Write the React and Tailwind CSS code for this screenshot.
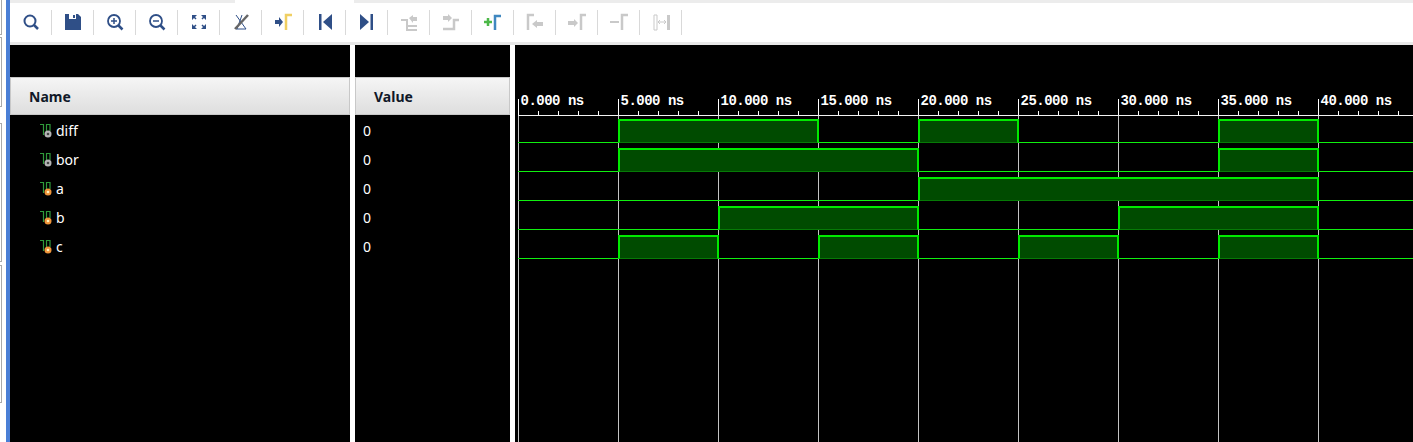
const signals = [
  { name: 'diff', kind: 'out', edges: [[5, 15], [20, 25], [35, 40]] },
  { name: 'bor', kind: 'out', edges: [[5, 20], [35, 40]] },
  { name: 'a', kind: 'in', edges: [[20, 40]] },
  { name: 'b', kind: 'in', edges: [[10, 20], [30, 40]] },
  { name: 'c', kind: 'in', edges: [[5, 10], [15, 20], [25, 30], [35, 40]] },
];

const BLUE = '#2f4f87';
const GRAY = '#c9c9c9';

function Icon({ children }) {
  return (
    <svg width="22" height="22" viewBox="0 0 22 22" fill="none">
      {children}
    </svg>
  );
}

const toolbar = [
  <Icon><circle cx="10" cy="10" r="5.5" stroke={BLUE} strokeWidth="2" /><path d="M14 14l4 4" stroke={BLUE} strokeWidth="2.5" /></Icon>,
  <Icon><path d="M3 3h13l3 3v13H3z" fill={BLUE} /><path d="M7 3h7v5H7z" fill="#fff" /><path d="M11 4h2v3h-2z" fill={BLUE} /></Icon>,
  <Icon><circle cx="10" cy="10" r="6" stroke={BLUE} strokeWidth="1.8" /><path d="M14.5 14.5l4 4" stroke={BLUE} strokeWidth="2.5" /><path d="M7 10h6M10 7v6" stroke={BLUE} strokeWidth="1.5" /></Icon>,
  <Icon><circle cx="10" cy="10" r="6" stroke={BLUE} strokeWidth="1.8" /><path d="M14.5 14.5l4 4" stroke={BLUE} strokeWidth="2.5" /><path d="M7 10h6" stroke={BLUE} strokeWidth="1.5" /></Icon>,
  <Icon><path d="M4 4h5L4 9zM18 4h-5l5 5zM4 18h5l-5-5zM18 18h-5l5-5z" fill={BLUE} /><path d="M8 8l-2-2M14 8l2-2M8 14l-2 2M14 14l2 2" stroke={BLUE} strokeWidth="1.500" /></Icon>,
  <Icon><path d="M6 4l10 14H6M12 4L7 18" stroke={BLUE} strokeWidth="1" /><path d="M5 18L18 4" stroke="#666" strokeWidth="2.5" /></Icon>,
  <Icon><path d="M3 9h4V6l4 5-4 5v-3H3z" fill={BLUE} /><path d="M14 19V4h6" stroke="#f0cf62" strokeWidth="2.5" /></Icon>,
  <Icon><path d="M5 3h2.5v16H5zM18 3v16L9 11z" fill={BLUE} /></Icon>,
  <Icon><path d="M14.500 3H17v16h-2.500zM4 3v16l9-8z" fill={BLUE} /></Icon>,
  <Icon><path d="M3 9h6v10h10M19 15h-9" stroke={GRAY} strokeWidth="2" /><path d="M11 7l4-3v2h4v4h-4v2z" fill={GRAY} /></Icon>,
  <Icon><path d="M3 18h11V9h5" stroke={GRAY} strokeWidth="2.500" /><path d="M3 5h5V3l4 4-4 4V9H3z" fill={GRAY} /></Icon>,
  <Icon><path d="M2 11h8M6 7v8" stroke="#4cb848" strokeWidth="2.500" /><path d="M13 19V5h6" stroke="#3f87c0" strokeWidth="2.500" /></Icon>,
  <Icon><path d="M4 19V4h6" stroke={GRAY} strokeWidth="2.500" /><path d="M8 13l5-4v2h6v4h-6v2z" fill={GRAY} /></Icon>,
  <Icon><path d="M2 10h6V8l4 4-4 4v-2H2z" fill={GRAY} /><path d="M15 19V4h5" stroke={GRAY} strokeWidth="2.500" /></Icon>,
  <Icon><path d="M2 11h9" stroke={GRAY} strokeWidth="2" /><path d="M14 19V4h6" stroke={GRAY} strokeWidth="2.500" /></Icon>,
  <Icon><path d="M4 4h3v15H4z" stroke={GRAY} strokeWidth="1" /><path d="M17 4h3v15h-3z" fill={GRAY} /><path d="M8 11h8M8 11l2-2M8 11l2 2M16 11l-2-2M16 11l-2 2" stroke={GRAY} strokeWidth="1" /></Icon>,
];

function SignalIcon({ kind }) {
  const dot = kind === 'out' ? '#b5b5b5' : '#f0953a';
  return (
    <svg width="14" height="15" viewBox="0 0 14 15" fill="none" className="shrink-0">
      <path d="M0 1.500h3.500V12" stroke="#2f9a3a" strokeWidth="1.200" />
      <path d="M6.500 11V1.500h3.500V8" stroke="#2f9a3a" strokeWidth="1.200" />
      <circle cx="8" cy="11" r="3.500" fill={dot} />
      <circle cx="8" cy="11" r="1.300" fill={kind === 'out' ? '#444' : '#fff3c0'} />
    </svg>
  );
}

function HeaderCell({ children, className }) {
  return (
    <div className={`h-[38px] flex items-center pt-[1px] bg-gradient-to-b from-[#f5f5f5] to-[#dedede] border border-[#c8c8c8] text-[14px] font-bold text-[#101828] ${className}`}>
      {children}
    </div>
  );
}

function Waveform() {
  const tx = (t) => 3.5 + t * 20;
  const labels = [0, 5, 10, 15, 20, 25, 30, 35, 40];
  const ticks = [];
  for (let i = 0; i < 45; i++) ticks.push(i);
  return (
    <svg width="898" height="397" viewBox="0 0 898 397" className="block">
      {labels.map((t) => (
        <text key={t} x={tx(t) + 2} y="60" fill="#fff" fontFamily="'Liberation Mono', monospace" fontWeight="700" fontSize="14" letterSpacing="-0.500" xmlSpace="preserve">
          {t.toFixed(3)} ns
        </text>
      ))}
      {labels.map((t) => (
        <path key={t} d={`M${tx(t)} 70V397`} stroke="#c4c4c4" strokeWidth="1" />
      ))}
      <path d="M3 70.500H898" stroke="#f2f2f2" strokeWidth="1" />
      {ticks.map((i) => (
        <path key={i} d={i % 5 === 0 ? `M${tx(i)} 54V70` : `M${tx(i)} 66V70`} stroke="#fff" strokeWidth="1" />
      ))}
      {signals.map((s, r) => {
        const hi = 75 + r * 29;
        const lo = 97.500 + r * 29;
        let low = `M3 ${lo}`;
        s.edges.forEach(([a, b]) => {
          low += `H${tx(a)}M${tx(b)} ${lo}`;
        });
        low += 'H898';
        return (
          <g key={s.name}>
            {s.edges.map(([a, b]) => (
              <g key={a}>
                <path d={`M${tx(a)} ${hi}H${tx(b)}V${lo}H${tx(a)}z`} fill="#004b00" stroke="#067a06" strokeWidth="1" />
                <path d={`M${tx(b) - 0.5} ${lo}V${hi}H${tx(a) + 0.5}V${lo}`} stroke="#00ea00" strokeWidth="2" fill="none" />
              </g>
            ))}
            <path d={low} stroke="#10f010" strokeWidth="1" fill="none" />
          </g>
        );
      })}
    </svg>
  );
}

export default function App() {
  return (
    <div className="w-[1413px] h-[442px] overflow-hidden bg-white flex font-['Noto_Sans','Liberation_Sans',sans-serif]">
      {/* window edges peeking out on the far left */}
      <div className="w-[6px] shrink-0 bg-white flex flex-col">
        <div className="w-[2px] h-[35px] border-r border-b border-[#aaaaaa]" />
        <div className="w-[2px] h-[70px] mt-[2px] border-r border-t border-b border-[#aaaaaa]" />
        <div className="w-[2px] h-[139px] mt-[16px] border-r border-t border-b border-[#aaaaaa]" />
        <div className="w-[2px] h-[138px] mt-[3px] border-r border-t border-b border-[#aaaaaa]" />
      </div>
      <div className="w-[4px] shrink-0 bg-[#4a7fd6]" />
      <div className="flex-1 flex flex-col min-w-0">
        <div className="h-[3px] flex">
          <div className="w-[225px] bg-[#ececec]" />
          <div className="flex-1 ml-[119px] bg-[#ececec]" />
        </div>
        <div className="h-[39px] flex items-center">
          {toolbar.map((icon, i) => (
            <div key={i} className="w-[42px] h-[25px] flex items-center justify-center border-r border-[#d9d9d9] -mt-[1px]">
              {icon}
            </div>
          ))}
        </div>
        <div className="h-[3px] bg-[#e8e8e8]" />
        <div className="flex-1 flex bg-white min-h-0">
          <div className="w-[340px] bg-black pt-[32px]">
            <HeaderCell className="pl-[18px]">Name</HeaderCell>
            <div className="pt-[1px]">
              {signals.map((s) => (
                <div key={s.name} className="h-[29px] flex items-center pl-[30px] gap-[2px] text-[14px] text-white">
                  <SignalIcon kind={s.kind} />
                  <span>{s.name}</span>
                </div>
              ))}
            </div>
          </div>
          <div className="w-[155px] ml-[5px] bg-black pt-[32px]">
            <HeaderCell className="pl-[18px]">Value</HeaderCell>
            <div className="pt-[1px]">
              {signals.map((s) => (
                <div key={s.name} className="h-[29px] flex items-center pl-[8px] text-[14px] text-white">0</div>
              ))}
            </div>
          </div>
          <div className="flex-1 ml-[5px] bg-black min-w-0">
            <Waveform />
          </div>
        </div>
      </div>
    </div>
  );
}
